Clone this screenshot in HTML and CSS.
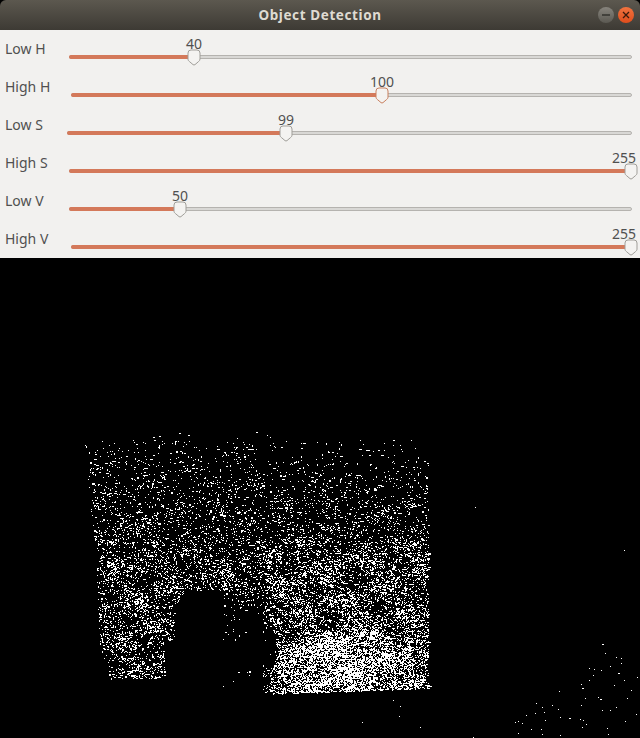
FILE: index.html
```html
<!DOCTYPE html>
<html lang="en">
<head>
    <meta charset="UTF-8">
    <title>Object Detection</title>
    <link rel="stylesheet" href="styles.css">
</head>
<body>
    <div class="window">
        <div class="titlebar">
            <span class="title">Object Detection</span>
            <div class="buttons">
                <button class="wm-btn wm-min" aria-label="Minimize">
                    <svg width="10" height="10" viewBox="0 0 10 10"><path d="M1 5h8" stroke="#2f2e2a" stroke-width="1.4"/></svg>
                </button>
                <button class="wm-btn wm-close" aria-label="Close">
                    <svg width="10" height="10" viewBox="0 0 10 10"><path d="M2 2l6 6M8 2l-6 6" stroke="#3a1a0c" stroke-width="1.3"/></svg>
                </button>
            </div>
        </div>

        <div class="controls" id="controls"></div>

        <canvas id="mask" class="mask" width="640" height="480"></canvas>
    </div>
    <script src="noise.js"></script>
</body>
</html>
```

FILE: styles.css
```css
* {
    box-sizing: border-box;
}
html, body {
    margin: 0;
    background: #000;
}
body {
    width: 640px;
    height: 738px;
    overflow: hidden;
    font-family: "Noto Sans", "Open Sans", sans-serif;
}
.window {
    display: flex;
    flex-direction: column;
}
.titlebar {
    height: 30px;
    display: flex;
    align-items: center;
    justify-content: center;
    position: relative;
    border-radius: 6px 6px 0 0;
    background: linear-gradient(#5c584f, #3d3a34);
}
.title {
    color: #dfdbd2;
    font-size: 13.5px;
    font-weight: 700;
    letter-spacing: 0.6px;
}
.buttons {
    position: absolute;
    right: 6px;
    top: 7px;
    display: flex;
    gap: 4px;
}
.wm-btn {
    width: 16px;
    height: 16px;
    padding: 0;
    border: none;
    border-radius: 50%;
    display: flex;
    align-items: center;
    justify-content: center;
}
.wm-min {
    background: linear-gradient(#87847d, #5b5952);
}
.wm-close {
    background: linear-gradient(#f0733f, #df4d1c);
}
.controls {
    height: 228px;
    background: #f2f1ef;
    display: flex;
    flex-direction: column;
}
.row {
    height: 38px;
    display: flex;
    color: #505050;
    padding: 0 8px 0 5px;
}
.row-label {
    font-size: 14px;
    line-height: 38px;
    white-space: nowrap;
}
.scale {
    flex: 1;
    position: relative;
}
.trough {
    position: absolute;
    left: 0;
    right: 0;
    top: 25px;
    height: 4px;
    border-radius: 2px;
    background: #d9d8d5;
    border: 1px solid #b5b3af;
}
.fill {
    position: absolute;
    left: 0;
    top: 25px;
    height: 4px;
    border-radius: 2px 0 0 2px;
    background: #d4795a;
}
.value {
    position: absolute;
    top: 5px;
    font-size: 14px;
    line-height: 18px;
    transform: translateX(-50%);
}
.thumb {
    position: absolute;
    top: 19px;
    transform: translateX(-50%);
    display: block;
}
.mask {
    display: block;
    width: 640px;
    height: 480px;
    background: #000;
}
```

FILE: noise.js
```js
// the six sliders, left = where the trough starts, handle = x of the handle
var sliders = [
    { name: 'Low H', value: 40, left: 69, handle: 194 },
    { name: 'High H', value: 100, left: 71, handle: 382 },
    { name: 'Low S', value: 99, left: 67, handle: 286 },
    { name: 'High S', value: 255, left: 69, handle: 631 },
    { name: 'Low V', value: 50, left: 69, handle: 180 },
    { name: 'High V', value: 255, left: 71, handle: 631 }
];

var thumb = '<svg class="thumb" width="14" height="17" viewBox="0 0 14 17">' +
    '<path d="M1 4a3 3 0 0 1 3-3h6a3 3 0 0 1 3 3v6c0 1.2-.6 1.9-1.5 2.6L8 15.6a1.600 1.600 0 0 1-2 0l-3.500-3C1.600 11.900 1 11.200 1 10z" ' +
    'fill="#f4f3f1" stroke="STROKE"/></svg>';

var controls = document.getElementById('controls');
sliders.forEach(function (s, i) {
    var x = s.handle - s.left;
    var stroke = i === 1 ? '#c9805f' : '#a09e99';
    var row = document.createElement('div');
    row.className = 'row';
    row.innerHTML =
        '<div class="row-label" style="width:' + (s.left - 5) + 'px">' + s.name + '</div>' +
        '<div class="scale">' +
        '<div class="trough"></div>' +
        '<div class="fill" style="width:' + x + 'px"></div>' +
        '<div class="value" style="left:' + (s.value === 255 ? x - 7 : x) + 'px">' + s.value + '</div>' +
        thumb.replace('STROKE', stroke).replace('class="thumb"', 'class="thumb" style="left:' + x + 'px"') +
        '</div>';
    controls.appendChild(row);
});

// thresholded camera mask: white specks, fixed seed so it is the same each run
var seed = 48271;
function rand() {
    seed = (seed * 16807) % 2147483647;
    return seed / 2147483647;
}

var ctx = document.getElementById('mask').getContext('2d');
ctx.fillStyle = '#000';
ctx.fillRect(0, 0, 640, 480);
ctx.fillStyle = '#fff';

function speck(x, y, hot) {
    var r = rand();
    var w = r < 0.82 ? 1 : (r < 0.96 ? 2 : 3 + (hot ? 2 : 0));
    var h = rand() < 0.9 ? 1 : 2;
    ctx.fillRect(Math.round(x), Math.round(y) - 258, w, h);
}

// left edge of the lit box for a given y
function boxLeft(y) {
    if (y < 560) return 85 + (y - 445) * 0.105;
    if (y < 640) return 97 + (y - 560) * 0.04;
    return 100 + (y - 640) * 0.27;
}

// how much light the hand leaves through, 1 = none in the way
function handLight(x, y) {
    if (y < 590 || x < 165 || x > 280) return 1;
    // palm, rounded at the top
    var palmTop = 590 + Math.pow(Math.max(0, 192 - x) / 17, 2) * 18;
    if (x < 175 && y < 640) return 1;
    if (x < 223) return y > palmTop ? 0 : 1;
    if (x < 240 && y < 640) return 0.25;
    // finger between the palm and the bright part
    var fingerTop = 604 + Math.abs(x - 250) * 0.5;
    if (x < 263) return y < fingerTop ? 0.6 : 0.02;
    if (y < 615) return 1;
    if (y > 628 && y < 668 && x < 277 - Math.abs(y - 650) * 0.2) return 0.03;
    return x < 270 ? 0.5 : 1;
}

// density per pixel inside the box
function density(x, y) {
    var u = (x - 85) / 345;
    var t = (y - 445) / 240;
    var d = 0.06 + 0.28 * Math.min(1, t * 1.8);
    // upper part fades out to the right
    if (t < 0.4) d *= 1 - (0.4 - t) * 1.6 * u;
    // middle of the right part is a bit stronger
    if (y > 540 && x > 265) d += 0.1;
    // blotches, the surface is not lit evenly
    d *= 0.8 + 0.4 * Math.sin(x * 0.09 + y * 0.04) * Math.sin(y * 0.13 - x * 0.03);
    // bright patch low on the right
    var dx = (x - 345) / 95;
    var dy = (y - 668) / 50;
    var hot = 1 - dx * dx - dy * dy;
    if (hot > 0) d += hot * 0.5;
    return d * 0.62;
}

for (var y = 440; y < 696; y++) {
    var xl = boxLeft(y);
    for (var x = Math.floor(xl); x < 429; x++) {
        var u = (x - xl) / (429 - xl);
        var top = 447 + u * 20;
        var bottom = x < 220 ? 678 : 694 - (x - 268) * 0.035;
        if (y < top || y > bottom) continue;
        if (rand() < density(x, y) * handLight(x, y)) speck(x, y, y > 630 && x > 280);
    }
}

// loose specks above the box
for (var a = 0; a < 18; a++) {
    ctx.fillRect(Math.round(100 + rand() * 200), Math.round(432 + rand() * 20) - 258, 1 + Math.floor(rand() * 2), 1);
}

// scatter in the lower right corner, single pixels thinning out upward
for (var b = 0; b < 120; b++) {
    var px = 515 + rand() * 125;
    var py = 735 - rand() * 105;
    if (py < 735 - (px - 500) * 0.9 || rand() < (735 - py) / 170) continue;
    ctx.fillRect(Math.round(px), Math.round(py) - 258, rand() < 0.85 ? 1 : 2, 1);
}

// a few strays right of the box and under it
var strays = [[475, 507], [624, 550], [393, 700], [400, 706], [362, 722], [399, 716], [420, 727], [473, 737], [515, 722], [560, 735]];
strays.forEach(function (p) {
    ctx.fillRect(p[0], p[1] - 258, 1, 1);
});
```
